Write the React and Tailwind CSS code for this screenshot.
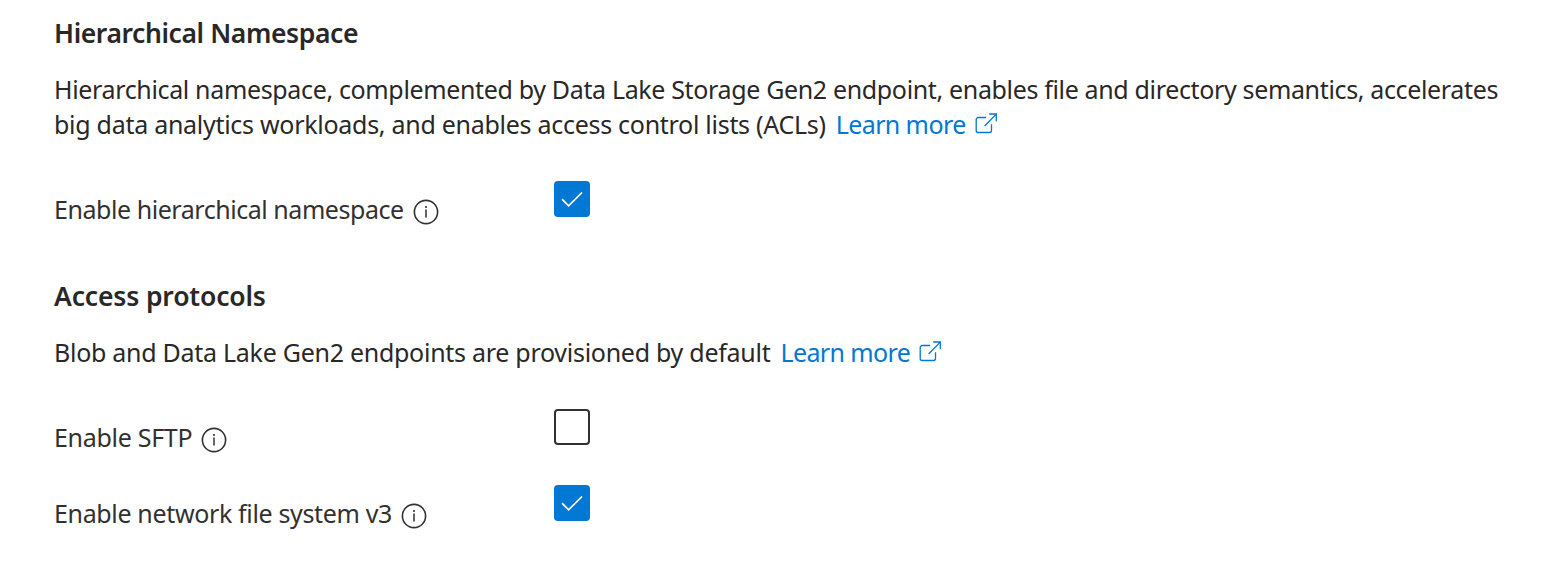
function LinkIcon() {
  return (
    <svg className="ml-[9px] mt-[5px] h-6 w-6 shrink-0" viewBox="0 0 24 24" fill="none" stroke="currentColor" strokeWidth="1.3">
      <path d="M11.2 5.5H3.2A2 2 0 0 0 1.2 7.5v11a2 2 0 0 0 2 2h11.3a2 2 0 0 0 2-2V12.2" />
      <path d="M9.6 14 21 2.4M14.2 2h7.1v7.2" />
    </svg>
  );
}

function InfoIcon() {
  return (
    <svg className="ml-[9px] mt-[7px] h-[26px] w-[26px] shrink-0" viewBox="0 0 26 26" fill="none" stroke="currentColor">
      <circle cx="13" cy="13" r="11.6" strokeWidth="1.6" />
      <path d="M13 10.5v8" strokeWidth="1.5" />
      <circle cx="13" cy="8" r="1.1" fill="currentColor" stroke="none" />
    </svg>
  );
}

function LearnMore() {
  return (
    <a className="ml-[10px] flex items-start text-[#0078d4]">
      <span className="tracking-[-0.6px]">Learn more</span>
      <LinkIcon />
    </a>
  );
}

function CheckBox({ checked }) {
  return checked ? (
    <span className="flex h-9 w-9 items-center justify-center rounded-[4px] bg-[#0078d4]">
      <svg className="h-9 w-9" viewBox="0 0 36 36" fill="none" stroke="#fff" strokeWidth="1.7">
        <path d="M8 18.2 14.6 24.8 28 11.5" />
      </svg>
    </span>
  ) : (
    <span className="h-9 w-9 rounded-[4px] border-2 border-[#323130] bg-white" />
  );
}

function Field({ label, checked }) {
  return (
    <div className="flex h-[46px] items-start">
      <div className="flex w-[500px] items-start pt-[11px] text-[#323130]">
        {label}
        <InfoIcon />
      </div>
      <CheckBox checked={checked} />
    </div>
  );
}

export default function App() {
  return (
    <main className="h-[565px] w-[1555px] overflow-hidden whitespace-nowrap bg-white pl-[54px] pt-[15px] font-['Noto_Sans','Open_Sans',sans-serif] text-[25px] leading-[35px] text-[#292827]">
      <section>
        <h2 className="text-[26.5px] font-semibold leading-9"><span className="tracking-[-0.4px]">Hierarchical Namespace</span></h2>
        <div className="mt-[21px]">
          <p className="flex"><span className="tracking-[-0.348px]">Hierarchical namespace, complemented by Data Lake Storage Gen2 endpoint, enables file and directory semantics, accelerates</span></p>
          <div className="flex">
            <span className="tracking-[-0.28px]">big data analytics workloads, and enables access control lists (ACLs)</span>
            <LearnMore />
          </div>
        </div>
        <div className="mt-[39px]">
          <Field label={<span className="tracking-[-0.45px]">Enable hierarchical namespace</span>} checked />
        </div>
      </section>
      <section className="mt-[51px]">
        <h2 className="text-[26.5px] font-semibold leading-9"><span className="tracking-[-0.15px]">Access protocols</span></h2>
        <div className="mt-[21px] flex">
          <span className="tracking-[-0.275px]">Blob and Data Lake Gen2 endpoints are provisioned by default</span>
          <LearnMore />
        </div>
        <div className="mt-[39px] flex flex-col gap-[30px]">
          <Field label={<span className="tracking-[-0.3px]">Enable SFTP</span>} />
          <Field label={<span className="tracking-[-0.35px]">Enable network file system v3</span>} checked />
        </div>
      </section>
    </main>
  );
}
